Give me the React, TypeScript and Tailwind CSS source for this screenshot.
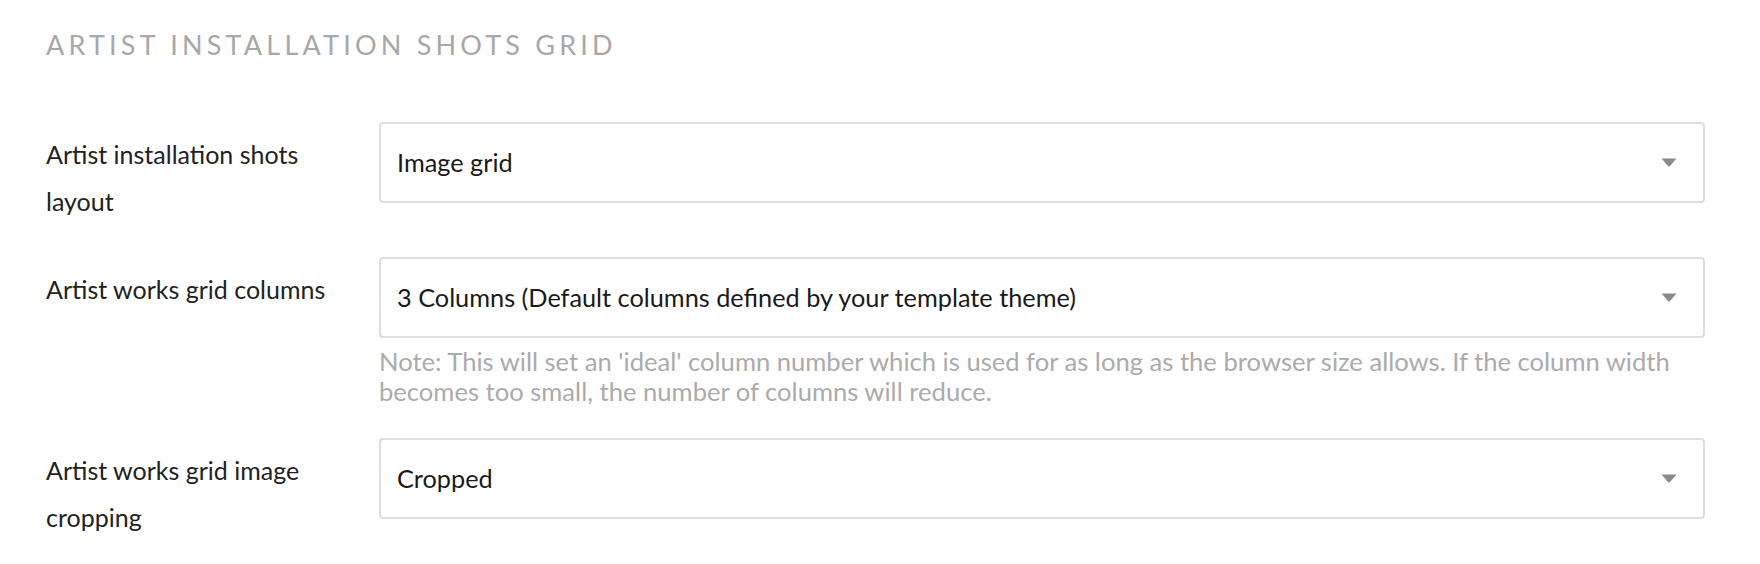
import React from "react";

function Arrow() {
  return (
    <svg width="16" height="9" viewBox="0 0 16 9" className="shrink-0">
      <path d="M0.5 0.5 H15.5 L9 8 Q8 9 7 8 Z" fill="#8a8a8a" />
    </svg>
  );
}

function Select({ value }: { value: string }) {
  return (
    <div className="h-[81px] border-2 border-[#dedede] rounded-[4px] bg-white flex items-center justify-between pl-[16px] pr-[26px]">
      <span className="text-[25.3px] text-[#1a1a1a]">{value}</span>
      <Arrow />
    </div>
  );
}

export default function App() {
  return (
    <div
      className="w-[1760px] h-[564px] bg-white pl-[46px] pr-[55px] pt-[29px] overflow-hidden"
      style={{ fontFamily: "Lato, 'Liberation Sans', sans-serif" }}
    >
      <h1 className="text-[27px] leading-[32px] tracking-[4.2px] text-[#a8a8a8] font-normal">
        ARTIST INSTALLATION SHOTS GRID
      </h1>
      <div className="mt-[61px] flex flex-col gap-[32px]">
        <div className="grid grid-cols-[333px_1fr]">
          <div className="pt-[9px] text-[25px] leading-[47px] text-[#222] pr-[20px]">
            Artist installation shots layout
          </div>
          <Select value="Image grid" />
        </div>
        <div className="grid grid-cols-[333px_1fr]">
          <div className="pt-[9px] text-[25px] leading-[47px] text-[#222] pr-[20px]">
            Artist works grid columns
          </div>
          <div>
            <Select value="3 Columns (Default columns defined by your template theme)" />
            <p className="mt-[8px] text-[25.6px] leading-[30px] text-[#ababab] pr-[10px]">
              Note: This will set an 'ideal' column number which is used for as long as the browser size allows. If the column width becomes too small, the number of columns will reduce.
            </p>
          </div>
        </div>
        <div className="grid grid-cols-[333px_1fr]">
          <div className="pt-[9px] text-[25px] leading-[47px] text-[#222] pr-[20px]">
            Artist works grid image cropping
          </div>
          <Select value="Cropped" />
        </div>
      </div>
    </div>
  );
}
